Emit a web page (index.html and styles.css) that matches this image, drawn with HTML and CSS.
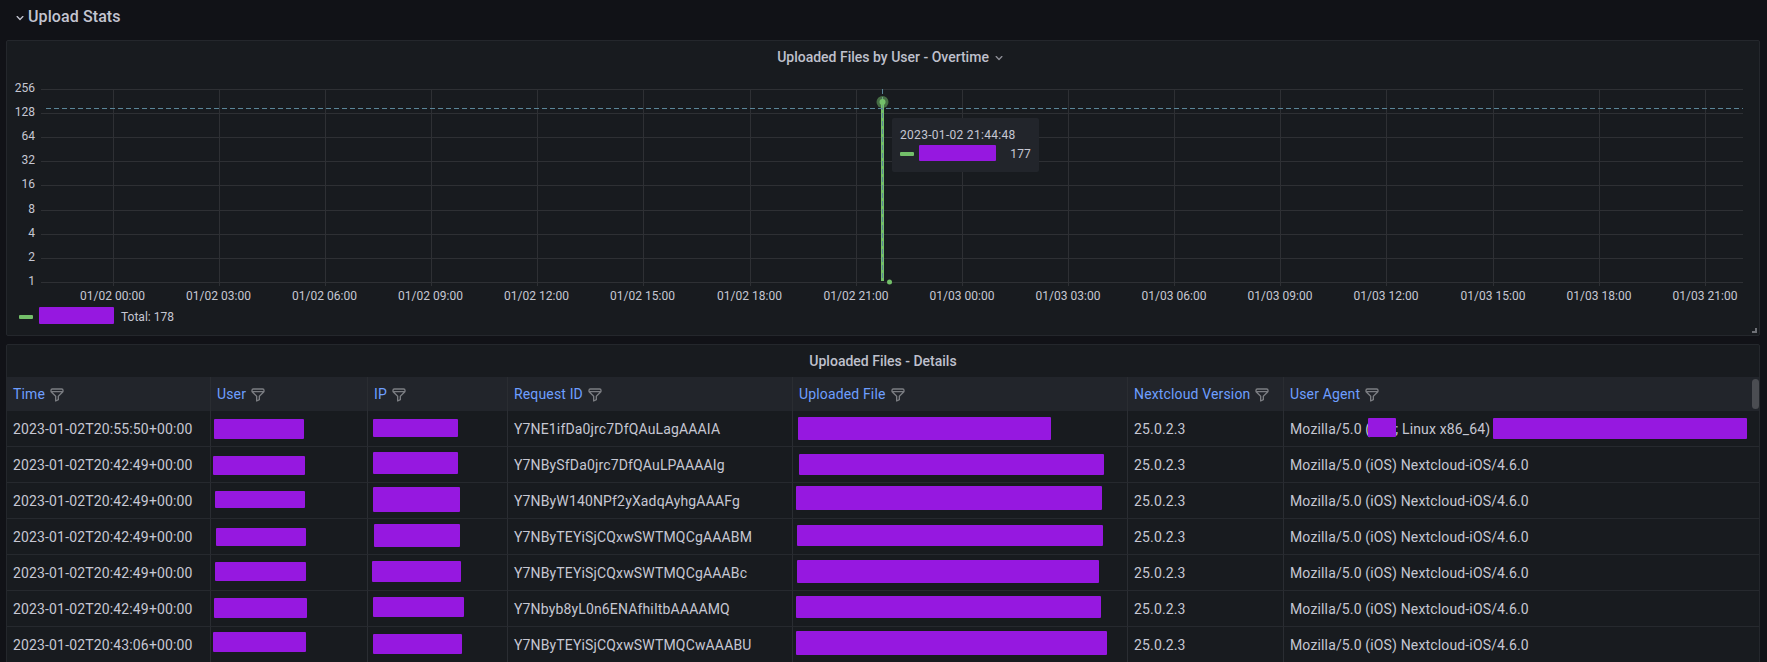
FILE: index.html
```html
<!DOCTYPE html>
<html lang="en">
<head>
<meta charset="utf-8">
<title>Upload Stats</title>
<link rel="stylesheet" href="styles.css">
</head>
<body>
<svg class="icon-defs" aria-hidden="true">
  <symbol id="filter" viewBox="0 0 24 24"><path d="M19,2H5A3,3,0,0,0,2,5V6.17a3,3,0,0,0,.25,1.2l0,.06a2.81,2.81,0,0,0,.59.86L9,14.41V21a1,1,0,0,0,.47.85A1,1,0,0,0,10,22a1,1,0,0,0,.45-.11l4-2A1,1,0,0,0,15,19V14.41l6.12-6.12a2.81,2.81,0,0,0,.59-.86l0-.06a3,3,0,0,0,.28-1.2V5A3,3,0,0,0,19,2ZM13.29,13.29A1,1,0,0,0,13,14v4.38l-2,1V14a1,1,0,0,0-.29-.71L5.41,8H18.59ZM20,6H4V5A1,1,0,0,1,5,4H19a1,1,0,0,1,1,1Z"/></symbol>
  <symbol id="angle" viewBox="0 0 24 24"><path d="M17,9.17a1,1,0,0,0-1.41,0L12,12.71,8.46,9.17a1,1,0,0,0-1.41,0,1,1,0,0,0,0,1.42l4.24,4.24a1,1,0,0,0,1.42,0L17,10.59A1,1,0,0,0,17,9.17Z"/></symbol>
</svg>

<header class="section">
  <svg class="section-chevron"><use href="#angle"/></svg>
  <span>Upload Stats</span>
</header>

<section class="panel panel-chart">
  <h2 class="panel-title"><span class="title-text">Uploaded Files by User - Overtime<svg class="title-chevron"><use href="#angle"/></svg></span></h2>
  <svg class="chart" viewBox="7 73 1752 233" width="1752" height="233">
    <g class="grid">
      <path d="M41 89.5H1743M41 113.5H1743M41 137.5H1743M41 161.5H1743M41 185.5H1743M41 210.5H1743M41 234.5H1743M41 258.5H1743M41 282.5H1743"/>
      <path d="M113.5 89V286M219.5 89V286M325.5 89V286M431.5 89V286M537.5 89V286M643.5 89V286M750.5 89V286M856.5 89V286M962.5 89V286M1068.5 89V286M1174.5 89V286M1280.5 89V286M1386.5 89V286M1493.5 89V286M1599.5 89V286M1705.5 89V286"/>
    </g>
    <g class="y-labels">
      <text x="35" y="92">256</text><text x="35" y="116">128</text><text x="35" y="140">64</text><text x="35" y="164">32</text><text x="35" y="188">16</text><text x="35" y="213">8</text><text x="35" y="237">4</text><text x="35" y="261">2</text><text x="35" y="285">1</text>
    </g>
    <g class="x-labels">
      <text x="112.5" y="300">01/02 00:00</text><text x="218.5" y="300">01/02 03:00</text><text x="324.5" y="300">01/02 06:00</text><text x="430.5" y="300">01/02 09:00</text><text x="536.5" y="300">01/02 12:00</text><text x="642.5" y="300">01/02 15:00</text><text x="749.5" y="300">01/02 18:00</text><text x="856" y="300">01/02 21:00</text><text x="962" y="300">01/03 00:00</text><text x="1068" y="300">01/03 03:00</text><text x="1174" y="300">01/03 06:00</text><text x="1280" y="300">01/03 09:00</text><text x="1386" y="300">01/03 12:00</text><text x="1493" y="300">01/03 15:00</text><text x="1599" y="300">01/03 18:00</text><text x="1705" y="300">01/03 21:00</text>
    </g>
    <path class="series" d="M882.5 102V281"/>
    <path class="crosshair" d="M46 108.5H1743M882.5 89V281"/>
    <circle class="halo" cx="882.5" cy="102" r="6"/>
    <circle class="point" cx="882.5" cy="102" r="3"/>
    <circle class="point" cx="889.5" cy="282" r="2.5"/>
  </svg>
  <div class="legend">
    <i class="swatch"></i><i class="redact legend-name"></i><span>Total: 178</span>
  </div>
  <div class="tooltip">
    <div class="tooltip-time">2023-01-02 21:44:48</div>
    <div class="tooltip-row"><i class="swatch"></i><i class="redact tooltip-name"></i><span class="tooltip-value">177</span></div>
  </div>
  <i class="resize-handle"></i>
</section>

<section class="panel panel-table">
  <h2 class="panel-title">Uploaded Files - Details</h2>
  <table class="details">
    <colgroup><col class="c-time"><col class="c-user"><col class="c-ip"><col class="c-req"><col class="c-file"><col class="c-ver"><col class="c-ua"></colgroup>
    <thead>
      <tr>
        <th>Time<svg class="funnel"><use href="#filter"/></svg></th>
        <th>User<svg class="funnel"><use href="#filter"/></svg></th>
        <th>IP<svg class="funnel"><use href="#filter"/></svg></th>
        <th>Request ID<svg class="funnel"><use href="#filter"/></svg></th>
        <th>Uploaded File<svg class="funnel"><use href="#filter"/></svg></th>
        <th>Nextcloud Version<svg class="funnel"><use href="#filter"/></svg></th>
        <th>User Agent<svg class="funnel"><use href="#filter"/></svg></th>
      </tr>
    </thead>
    <tbody>
      <tr>
        <td>2023-01-02T20:55:50+00:00</td><td><i class="redact u1"></i></td><td><i class="redact p1"></i></td><td>Y7NE1ifDa0jrc7DfQAuLagAAAIA</td><td><i class="redact f1"></i></td><td>25.0.2.3</td>
        <td>Mozilla/5.0 (X11; Linux x86_64)<i class="redact a1"></i><i class="redact a2"></i></td>
      </tr>
      <tr>
        <td>2023-01-02T20:42:49+00:00</td><td><i class="redact u2"></i></td><td><i class="redact p2"></i></td><td>Y7NBySfDa0jrc7DfQAuLPAAAAIg</td><td><i class="redact f2"></i></td><td>25.0.2.3</td><td>Mozilla/5.0 (iOS) Nextcloud-iOS/4.6.0</td>
      </tr>
      <tr>
        <td>2023-01-02T20:42:49+00:00</td><td><i class="redact u3"></i></td><td><i class="redact p3"></i></td><td>Y7NByW140NPf2yXadqAyhgAAAFg</td><td><i class="redact f3"></i></td><td>25.0.2.3</td><td>Mozilla/5.0 (iOS) Nextcloud-iOS/4.6.0</td>
      </tr>
      <tr>
        <td>2023-01-02T20:42:49+00:00</td><td><i class="redact u4"></i></td><td><i class="redact p4"></i></td><td>Y7NByTEYiSjCQxwSWTMQCgAAABM</td><td><i class="redact f4"></i></td><td>25.0.2.3</td><td>Mozilla/5.0 (iOS) Nextcloud-iOS/4.6.0</td>
      </tr>
      <tr>
        <td>2023-01-02T20:42:49+00:00</td><td><i class="redact u5"></i></td><td><i class="redact p5"></i></td><td>Y7NByTEYiSjCQxwSWTMQCgAAABc</td><td><i class="redact f5"></i></td><td>25.0.2.3</td><td>Mozilla/5.0 (iOS) Nextcloud-iOS/4.6.0</td>
      </tr>
      <tr>
        <td>2023-01-02T20:42:49+00:00</td><td><i class="redact u6"></i></td><td><i class="redact p6"></i></td><td>Y7Nbyb8yL0n6ENAfhiItbAAAAMQ</td><td><i class="redact f6"></i></td><td>25.0.2.3</td><td>Mozilla/5.0 (iOS) Nextcloud-iOS/4.6.0</td>
      </tr>
      <tr>
        <td>2023-01-02T20:43:06+00:00</td><td><i class="redact u7"></i></td><td><i class="redact p7"></i></td><td>Y7NByTEYiSjCQxwSWTMQCwAAABU</td><td><i class="redact f7"></i></td><td>25.0.2.3</td><td>Mozilla/5.0 (iOS) Nextcloud-iOS/4.6.0</td>
      </tr>
    </tbody>
  </table>
  <i class="scrollbar"></i>
</section>
</body>
</html>
```
FILE: styles.css
```css
* { box-sizing: border-box; }
html, body { height: 662px; overflow: hidden; }
body {
  margin: 0;
  background: #111217;
  color: #c6c7d3;
  font-family: Roboto, "Liberation Sans", sans-serif;
  font-size: 14px;
  letter-spacing: 0.01071em;
}
.icon-defs { position: absolute; width: 0; height: 0; }

.section {
  display: flex;
  align-items: center;
  height: 33px;
  margin-bottom: 7px;
  padding-left: 12px;
  font-size: 16px;
  font-weight: 500;
  letter-spacing: 0.1px;
  color: #c3c4d0;
}
.section-chevron { width: 16px; height: 16px; fill: #c3c4d0; margin-top: 3px; }

.panel {
  position: relative;
  width: 1754px;
  margin-left: 6px;
  background: #181b1f;
  border: 1px solid #24272c;
  border-radius: 2px;
}
.panel-chart { height: 296px; margin-bottom: 8px; }
.panel-table { height: 330px; overflow: hidden; }
.panel-title {
  margin: 0;
  height: 32px;
  line-height: 32px;
  text-align: center;
  font-size: 14px;
  font-weight: 500;
  letter-spacing: 0;
  color: #bfc0cc;
}
.title-text { position: relative; }
.title-chevron {
  position: absolute;
  left: 214px;
  top: 1px;
  width: 16px;
  height: 16px;
  fill: #8e8f97;
}

.chart { display: block; }
.grid path { stroke: #2e3034; stroke-width: 1; fill: none; }
.chart text { font-size: 12px; fill: #c6c7d3; letter-spacing: 0; }
.y-labels text { text-anchor: end; }
.x-labels text { text-anchor: middle; }
.series { stroke: #73bf69; stroke-width: 3; fill: none; }
.crosshair { stroke: #5a8598; stroke-width: 1; stroke-dasharray: 5 3; fill: none; }
.halo { fill: #73bf69; opacity: .5; }
.point { fill: #73bf69; }

.legend {
  display: flex;
  align-items: center;
  height: 20px;
  margin-top: -1px;
  padding-left: 12px;
  font-size: 12px;
  letter-spacing: 0;
}
.swatch {
  flex: none;
  width: 14px;
  height: 4px;
  margin-right: 6px;
  background: #73bf69;
  border-radius: 1px;
  margin-top: 3px;
}
.redact { background: #9618e0; border-radius: 1px; }
.legend-name { width: 75px; height: 17px; margin-right: 7px; }
.legend span { margin-top: 3px; }

.tooltip {
  position: absolute;
  left: 885px;
  top: 77px;
  width: 147px;
  height: 54px;
  padding: 8px 8px 0;
  background: #22252b;
  border-radius: 2px;
  font-size: 12px;
}
.tooltip-time { line-height: 16px; margin-top: 1px; letter-spacing: 0.3px; }
.tooltip-row { display: flex; align-items: center; height: 17px; margin-top: 1px; }
.tooltip-row .swatch { margin-right: 5px; margin-top: 2px; }
.tooltip-name { width: 78px; height: 16px; }
.tooltip-value { margin-left: 14px; margin-top: 2px; }

.resize-handle {
  position: absolute;
  right: 2px;
  bottom: 2px;
  width: 5px;
  height: 5px;
  border-right: 2px solid #6e7076;
  border-bottom: 2px solid #6e7076;
}

.details {
  width: 1752px;
  table-layout: fixed;
  border-collapse: separate;
  border-spacing: 0;
}
.c-time { width: 204px; }
.c-user { width: 157px; }
.c-ip { width: 140px; }
.c-req { width: 285px; }
.c-file { width: 335px; }
.c-ver { width: 156px; }
.c-ua { width: 475px; }
th, td {
  position: relative;
  padding: 0 6px;
  text-align: left;
  white-space: nowrap;
  overflow: visible;
  font-weight: 400;
  border-right: 1px solid #2a2d32;
}
th:last-child, td:last-child { border-right: 0; }
th {
  height: 34px;
  background: #22252b;
  color: #6e9fff;
}
td {
  height: 36px;
  border-bottom: 1px solid #26292e;
}
.funnel {
  width: 16px;
  height: 16px;
  margin-left: 4px;
  fill: #7b7d82;
  vertical-align: -4px;
}
td .redact { position: absolute; display: block; }

.u1 { left: 3px; top: 8px; width: 90px; height: 20px; }
.u2 { left: 2px; top: 9px; width: 92px; height: 19px; }
.u3 { left: 4px; top: 8px; width: 90px; height: 17px; }
.u4 { left: 5px; top: 9px; width: 90px; height: 18px; }
.u5 { left: 4px; top: 7px; width: 91px; height: 19px; }
.u6 { left: 3px; top: 7px; width: 93px; height: 20px; }
.u7 { left: 2px; top: 5px; width: 93px; height: 20px; }

.p1 { left: 5px; top: 8px; width: 85px; height: 18px; }
.p2 { left: 5px; top: 5px; width: 85px; height: 22px; }
.p3 { left: 5px; top: 4px; width: 87px; height: 25px; }
.p4 { left: 6px; top: 5px; width: 86px; height: 23px; }
.p5 { left: 4px; top: 6px; width: 89px; height: 21px; }
.p6 { left: 5px; top: 6px; width: 91px; height: 20px; }
.p7 { left: 5px; top: 7px; width: 89px; height: 20px; }

.f1 { left: 5px; top: 6px; width: 253px; height: 23px; }
.f2 { left: 6px; top: 7px; width: 305px; height: 21px; }
.f3 { left: 3px; top: 3px; width: 306px; height: 24px; }
.f4 { left: 4px; top: 6px; width: 306px; height: 21px; }
.f5 { left: 4px; top: 5px; width: 302px; height: 23px; }
.f6 { left: 3px; top: 5px; width: 305px; height: 22px; }
.f7 { left: 3px; top: 4px; width: 311px; height: 24px; }

.a1 { left: 84px; top: 7px; width: 28px; height: 19px; }
.a2 { left: 209px; top: 7px; width: 254px; height: 21px; }

.scrollbar {
  position: absolute;
  right: 0;
  top: 34px;
  width: 7px;
  height: 30px;
  background: #4b4d52;
  border-radius: 4px;
}
```
